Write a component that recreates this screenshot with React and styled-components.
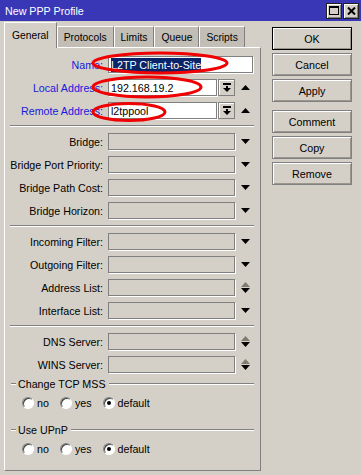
import React from "react";
import styled, { createGlobalStyle } from "styled-components";

const GlobalStyle = createGlobalStyle`
  html, body { margin: 0; padding: 0; background: #d4d0c8; }
  body { font-family: "Liberation Sans", Arial, sans-serif; font-size: 10.7px; color: #000; }
  * { box-sizing: border-box; }
`;

const Window = styled.div`
  position: relative;
  width: 361px;
  height: 475px;
  background: #d4d0c8;
  display: flex;
  flex-direction: column;
  overflow: hidden;
`;

const TitleBar = styled.div`
  height: 21px;
  flex: none;
  background: #3a37b6;
  color: #fff;
  display: flex;
  align-items: center;
  justify-content: space-between;
  padding: 0 2px 0 5px;
`;

const Title = styled.span`
  font-size: 10.7px;
  line-height: 1;
  margin-top: 1px;
`;

const TitleButtons = styled.div`
  display: flex;
  gap: 1px;
`;

const TitleBtn = styled.div`
  width: 16px;
  height: 16px;
  background: #d4d0c8;
  border: 1px solid #202020;
  box-shadow: inset 1px 1px 0 #fff, inset -1px -1px 0 #808080;
  display: flex;
  align-items: center;
  justify-content: center;
`;

const Main = styled.div`
  flex: 1;
  display: flex;
  padding: 1px 0 4px 4px;
  gap: 11px;
  min-height: 0;
`;

const LeftCol = styled.div`
  width: 257px;
  display: flex;
  flex-direction: column;
`;

const TabStrip = styled.div`
  height: 25px;
  display: flex;
  align-items: flex-end;
  position: relative;
  z-index: 1;
`;

const Tab = styled.div`
  height: ${(p) => (p.$active ? 26 : 21)}px;
  margin-bottom: ${(p) => (p.$active ? -1 : 0)}px;
  padding: 0 ${(p) => (p.$active ? 7 : 6)}px;
  font-size: 10.3px;
  display: flex;
  align-items: center;
  background: ${(p) => (p.$active ? "#d4d0c8" : "#c2beb6")};
  border-top: 1px solid #fff;
  border-left: 1px solid #fff;
  border-right: 1px solid #808080;
  white-space: nowrap;
`;

const Panel = styled.div`
  flex: 1;
  border: 1px solid;
  border-color: #fff #808080 #808080 #fff;
  padding: 8px 6px 0 5px;
  display: flex;
  flex-direction: column;
`;

const Fields = styled.div`
  display: flex;
  flex-direction: column;
  gap: 6px;
`;

const Row = styled.div`
  display: flex;
  align-items: center;
  height: 17px;
`;

const Label = styled.div`
  width: 93px;
  margin-right: 5px;
  text-align: right;
  white-space: nowrap;
  color: ${(p) => (p.$required ? "#1818dc" : "#000")};
`;

const Control = styled.div`
  width: 145px;
  height: 17px;
  display: flex;
  align-items: center;
`;

const Input = styled.div`
  flex: 1;
  height: 17px;
  border: 1px solid #808080;
  box-shadow: 1px 1px 0 #fff;
  background: ${(p) => (p.$enabled ? "#fff" : "transparent")};
  padding-left: 2px;
  display: flex;
  align-items: center;
  white-space: nowrap;
  overflow: hidden;
`;

const Selected = styled.span`
  background: #0a246a;
  color: #fff;
  padding: 1px 0;
`;

const DropBtn = styled.div`
  width: 17px;
  height: 17px;
  margin-left: 1px;
  border: 1px solid #808080;
  box-shadow: inset 1px 1px 0 #fff;
  display: flex;
  align-items: center;
  justify-content: center;
`;

const ArrowSlot = styled.div`
  width: 18px;
  height: 17px;
  display: flex;
  flex-direction: column;
  align-items: center;
  justify-content: center;
  gap: 1px;
  padding-left: 2px;
`;

const Separator = styled.div`
  height: 2px;
  border-top: 1px solid #808080;
  border-bottom: 1px solid #fff;
`;

const Group = styled.div`
  margin-top: ${(p) => (p.$first ? 5 : 15)}px;
`;

const Legend = styled.div`
  display: flex;
  align-items: center;
  height: 12px;
  margin-left: 1px;
  white-space: nowrap;
`;

const LegendLine = styled.div`
  height: 2px;
  border-top: 1px solid #808080;
  border-bottom: 1px solid #fff;
  width: ${(p) => (p.$grow ? "auto" : "5px")};
  flex: ${(p) => (p.$grow ? 1 : "none")};
`;

const LegendText = styled.span`
  margin: 0 3px 0 2px;
`;

const RadioRow = styled.div`
  display: flex;
  align-items: center;
  height: 12px;
  margin-top: 7px;
  padding-left: 12px;
  gap: 11px;
`;

const RadioItem = styled.label`
  display: flex;
  align-items: center;
  gap: 3px;
`;

const RadioCircle = styled.span`
  width: 12px;
  height: 12px;
  border-radius: 50%;
  background: #fff;
  border: 1px solid;
  border-color: #808080 #fff #fff #808080;
  box-shadow: inset 1px 1px 0 #404040;
  display: flex;
  align-items: center;
  justify-content: center;
  &::after {
    content: "";
    width: 4px;
    height: 4px;
    border-radius: 50%;
    background: ${(p) => (p.$checked ? "#000" : "transparent")};
  }
`;

const ButtonCol = styled.div`
  margin-top: 5px;
  display: flex;
  flex-direction: column;
  gap: 8px;
`;

const ButtonGroup = styled.div`
  display: flex;
  flex-direction: column;
  gap: 3px;
`;

const Button = styled.div`
  width: 80px;
  height: 23px;
  display: flex;
  align-items: center;
  justify-content: center;
  border: 1px solid ${(p) => (p.$default ? "#000" : "#808080")};
  box-shadow: inset 1px 1px 0 #fff, inset -1px -1px 0 #9a968e;
`;

const Overlay = styled.svg`
  position: absolute;
  left: 0;
  top: 0;
  pointer-events: none;
`;

const DownTri = ({ color = "#000" }) => (
  <svg width="9" height="5" viewBox="0 0 9 5">
    <polygon points="0,0 9,0 4.5,5" fill={color} />
  </svg>
);

const UpTri = ({ color = "#000" }) => (
  <svg width="9" height="5" viewBox="0 0 9 5">
    <polygon points="0,5 9,5 4.5,0" fill={color} />
  </svg>
);

const DropGlyph = () => (
  <svg width="8" height="9" viewBox="0 0 8 9">
    <rect x="0" y="0" width="8" height="2" fill="#000" />
    <rect x="3" y="3" width="2" height="2" fill="#000" />
    <polygon points="0,5 8,5 4,9" fill="#000" />
  </svg>
);

function Field({ label, required, kind, value, selected, enabled }) {
  return (
    <Row>
      <Label $required={required}>{label}</Label>
      <Control>
        <Input $enabled={enabled}>
          {selected ? <Selected>{value}</Selected> : value}
        </Input>
        {kind === "combo" && (
          <>
            <DropBtn>
              <DropGlyph />
            </DropBtn>
            <ArrowSlot>
              <UpTri />
            </ArrowSlot>
          </>
        )}
        {kind === "down" && (
          <ArrowSlot>
            <DownTri />
          </ArrowSlot>
        )}
        {kind === "updown" && (
          <ArrowSlot>
            <UpTri color="#7c7c70" />
            <DownTri />
          </ArrowSlot>
        )}
      </Control>
    </Row>
  );
}

function RadioGroup({ title, first }) {
  return (
    <Group $first={first}>
      <Legend>
        <LegendLine />
        <LegendText>{title}</LegendText>
        <LegendLine $grow />
      </Legend>
      <RadioRow>
        <RadioItem><RadioCircle />no</RadioItem>
        <RadioItem><RadioCircle />yes</RadioItem>
        <RadioItem><RadioCircle $checked />default</RadioItem>
      </RadioRow>
    </Group>
  );
}

const tabs = ["General", "Protocols", "Limits", "Queue", "Scripts"];

export default function App() {
  return (
    <>
      <GlobalStyle />
      <Window>
        <TitleBar>
          <Title>New PPP Profile</Title>
          <TitleButtons>
            <TitleBtn>
              <svg width="10" height="9" viewBox="0 0 10 9">
                <rect x="0.5" y="0.5" width="9" height="8" fill="none" stroke="#000" />
                <rect x="0" y="0" width="10" height="2" fill="#000" />
              </svg>
            </TitleBtn>
            <TitleBtn>
              <svg width="9" height="8" viewBox="0 0 9 8">
                <path d="M1 0.5 L8 7.5 M8 0.5 L1 7.5" stroke="#000" strokeWidth="2" />
              </svg>
            </TitleBtn>
          </TitleButtons>
        </TitleBar>
        <Main>
          <LeftCol>
            <TabStrip>
              {tabs.map((t, i) => (
                <Tab key={t} $active={i === 0}>{t}</Tab>
              ))}
            </TabStrip>
            <Panel>
              <Fields>
                <Field label="Name:" required enabled value="L2TP Client-to-Site" selected />
                <Field label="Local Address:" required enabled kind="combo" value="192.168.19.2" />
                <Field label="Remote Address:" required enabled kind="combo" value="l2tppool" />
                <Separator />
                <Field label="Bridge:" kind="down" />
                <Field label="Bridge Port Priority:" kind="down" />
                <Field label="Bridge Path Cost:" kind="down" />
                <Field label="Bridge Horizon:" kind="down" />
                <Separator />
                <Field label="Incoming Filter:" kind="down" />
                <Field label="Outgoing Filter:" kind="down" />
                <Field label="Address List:" kind="updown" />
                <Field label="Interface List:" kind="down" />
                <Separator />
                <Field label="DNS Server:" kind="updown" />
                <Field label="WINS Server:" kind="updown" />
              </Fields>
              <RadioGroup title="Change TCP MSS" first />
              <RadioGroup title="Use UPnP" />
            </Panel>
          </LeftCol>
          <ButtonCol>
            <ButtonGroup>
              <Button $default>OK</Button>
              <Button>Cancel</Button>
              <Button>Apply</Button>
            </ButtonGroup>
            <ButtonGroup>
              <Button>Comment</Button>
              <Button>Copy</Button>
              <Button>Remove</Button>
            </ButtonGroup>
          </ButtonCol>
        </Main>
        <Overlay width="361" height="475" viewBox="0 0 361 475">
          <g fill="none" stroke="#f00000" strokeWidth="3">
            <ellipse cx="160" cy="63" rx="67" ry="10" />
            <ellipse cx="147" cy="87" rx="54" ry="10" />
            <ellipse cx="129" cy="112" rx="36" ry="8.5" />
          </g>
        </Overlay>
      </Window>
    </>
  );
}
